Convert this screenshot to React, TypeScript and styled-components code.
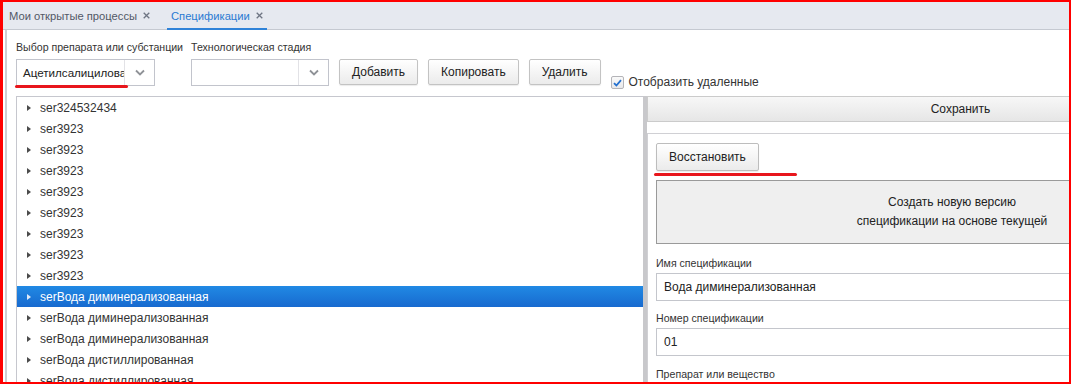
import React from "react";
import styled, { createGlobalStyle } from "styled-components";

const GlobalStyle = createGlobalStyle`
  html, body {
    margin: 0;
    padding: 0;
    background: #ffffff;
  }
  body {
    font-family: "Liberation Sans", Arial, sans-serif;
    font-size: 12px;
    color: #333;
  }
`;

const Screen = styled.div`
  position: relative;
  width: 1071px;
  height: 384px;
  overflow: hidden;
  background: #fff;
  padding: 2px 0 0 3px;
  box-sizing: border-box;
`;

// red annotation frame drawn over the screenshot
const Frame = styled.div`
  position: absolute;
  inset: 0;
  border-style: solid;
  border-color: #ff0000;
  border-width: 2px 2px 2px 3px;
  pointer-events: none;
  z-index: 10;
`;

const Mark = styled.div<{ $left: number; $top: number; $width: number }>`
  position: absolute;
  left: ${(p) => p.$left}px;
  top: ${(p) => p.$top}px;
  width: ${(p) => p.$width}px;
  height: 3px;
  border-radius: 2px;
  background: #e8161c;
  z-index: 10;
`;

const TabBar = styled.div`
  display: flex;
  align-items: stretch;
  gap: 13px;
  height: 28px;
  box-sizing: border-box;
  padding-left: 2px;
  background: #e6e9f0;
  border-bottom: 1px solid #c5c9d1;
`;

const Tab = styled.div<{ $active?: boolean }>`
  position: relative;
  display: flex;
  align-items: center;
  gap: 6px;
  padding: 0 4px;
  font-size: 11.2px;
  color: ${(p) => (p.$active ? "#2a7ad2" : "#525866")};
  &::after {
    content: "";
    display: ${(p) => (p.$active ? "block" : "none")};
    position: absolute;
    left: 0;
    right: 0;
    bottom: -1px;
    height: 2px;
    background: #2f82d8;
  }
`;

const CloseIcon = () => (
  <svg width="7" height="7" viewBox="0 0 7 7">
    <path d="M0.7 0.7 L6.3 6.3 M6.3 0.7 L0.7 6.3" stroke="#6e7583" strokeWidth="1.3" />
  </svg>
);

const Workspace = styled.div`
  margin-left: 2px;
  border-left: 2px solid #cdcdd2;
  padding-left: 9px;
  height: 354px;
  box-sizing: border-box;
  display: flex;
  flex-direction: column;
`;

const FilterBar = styled.div`
  display: flex;
  align-items: flex-end;
  padding-top: 10px;
  margin-bottom: 10px;
`;

const FieldGroup = styled.div<{ $width: number }>`
  display: flex;
  flex-direction: column;
  width: ${(p) => p.$width}px;
  flex-shrink: 0;
`;

const SmallLabel = styled.div`
  font-size: 10.6px;
  line-height: 14px;
  color: #333;
  white-space: nowrap;
  margin-bottom: 5px;
`;

const Combo = styled.div<{ $width: number }>`
  display: flex;
  width: ${(p) => p.$width}px;
  height: 27px;
  box-sizing: border-box;
  border: 1px solid #c2c4cc;
  background: #fff;
`;

const ComboValue = styled.div`
  flex: 1;
  overflow: hidden;
  white-space: nowrap;
  padding-left: 6px;
  line-height: 25px;
  font-size: 11.6px;
  color: #222;
`;

const ComboTrigger = styled.div`
  width: 29px;
  flex-shrink: 0;
  border-left: 1px solid #e2e2e6;
  display: flex;
  align-items: center;
  justify-content: center;
`;

const Chevron = () => (
  <svg width="10" height="7" viewBox="0 0 10 7">
    <polyline points="1,1.5 5,5.5 9,1.5" fill="none" stroke="#8f9297" strokeWidth="1.8" />
  </svg>
);

const Button = styled.button`
  height: 26px;
  margin-bottom: 1px;
  margin-left: 10px;
  padding: 0 12px;
  font-family: "Liberation Sans", Arial, sans-serif;
  font-size: 12px;
  color: #222;
  background: linear-gradient(#ffffff, #ebebeb);
  border: 1px solid #c3c3c3;
  border-radius: 2px;
  box-shadow: 0 1px 1px rgba(0, 0, 0, 0.08);
  white-space: nowrap;
`;

const CheckRow = styled.label`
  display: flex;
  align-items: center;
  gap: 5px;
  margin-left: 10px;
  margin-bottom: -3px;
  font-size: 12px;
  color: #333;
  white-space: nowrap;
`;

const CheckBox = styled.span`
  display: flex;
  align-items: center;
  justify-content: center;
  width: 13px;
  height: 13px;
  margin-top: 2px;
  box-sizing: border-box;
  border: 1px solid #b4b4b8;
  border-radius: 2px;
  background: linear-gradient(#fafafa, #e8e8ea);
`;

const Split = styled.div`
  flex: 1;
  display: flex;
  min-height: 0;
`;

const Tree = styled.div`
  width: 627px;
  flex-shrink: 0;
  box-sizing: border-box;
  border-top: 1px solid #c6c7ce;
  border-left: 1px solid #c6c7ce;
  overflow: hidden;
`;

const TreeRow = styled.div<{ $selected?: boolean }>`
  display: flex;
  align-items: center;
  gap: 9px;
  height: 21px;
  padding-left: 10px;
  font-size: 12px;
  white-space: nowrap;
  color: ${(p) => (p.$selected ? "#ffffff" : "#333")};
  background: ${(p) => (p.$selected ? "linear-gradient(#2189e4, #176acf)" : "transparent")};
`;

const Caret = styled.span<{ $light?: boolean }>`
  width: 0;
  height: 0;
  border-left: 4px solid ${(p) => (p.$light ? "#dfeaf8" : "#4b4b4b")};
  border-top: 3.5px solid transparent;
  border-bottom: 3.5px solid transparent;
`;

const Splitter = styled.div`
  width: 4px;
  flex-shrink: 0;
  background: #c8c8cb;
`;

const Detail = styled.div`
  width: 626px;
  flex-shrink: 0;
  display: flex;
  flex-direction: column;
`;

const DetailToolbar = styled.div`
  height: 26px;
  box-sizing: border-box;
  border: 1px solid #cbcbcb;
  border-right: none;
  background: linear-gradient(#f7f7f7, #e6e6e6);
  display: flex;
  align-items: center;
  justify-content: center;
  font-size: 12px;
  color: #222;
`;

const Form = styled.div`
  margin-top: 11px;
  flex: 1;
  border-top: 1px solid #d0d0d4;
  border-left: 1px solid #d0d0d4;
  padding: 9px 25px 0 8px;
  display: flex;
  flex-direction: column;
  align-items: flex-start;
`;

const RestoreButton = styled(Button)`
  height: 28px;
  margin: 0;
  padding: 0 12px;
  border-color: #bdbdbd;
`;

const WideButton = styled.div`
  align-self: stretch;
  margin-top: 9px;
  height: 64px;
  box-sizing: border-box;
  border: 1px solid #9a9a9a;
  background: #efefef;
  display: flex;
  align-items: center;
  justify-content: center;
  text-align: center;
  font-size: 12px;
  line-height: 19px;
  color: #222;
`;

const FieldLabel = styled.div<{ $gap: number }>`
  margin-top: ${(p) => p.$gap}px;
  margin-bottom: 3px;
  font-size: 10.6px;
  line-height: 14px;
  color: #333;
`;

const TextInput = styled.div`
  align-self: stretch;
  height: 28px;
  box-sizing: border-box;
  border: 1px solid #c4c6cc;
  padding-left: 7px;
  line-height: 26px;
  font-size: 12px;
  color: #222;
`;

const treeItems = [
  "ser324532434",
  "ser3923",
  "ser3923",
  "ser3923",
  "ser3923",
  "ser3923",
  "ser3923",
  "ser3923",
  "ser3923",
  "serВода диминерализованная",
  "serВода диминерализованная",
  "serВода диминерализованная",
  "serВода дистиллированная",
  "serВода дистиллированная",
];

const App = () => {
  return (
    <Screen>
      <GlobalStyle />
      <TabBar>
        <Tab>
          Мои открытые процессы <CloseIcon />
        </Tab>
        <Tab $active>
          Спецификации <CloseIcon />
        </Tab>
      </TabBar>
      <Workspace>
        <FilterBar>
          <FieldGroup $width={175}>
            <SmallLabel>Выбор препарата или субстанции</SmallLabel>
            <Combo $width={139}>
              <ComboValue>Ацетилсалициловая кислота</ComboValue>
              <ComboTrigger>
                <Chevron />
              </ComboTrigger>
            </Combo>
          </FieldGroup>
          <FieldGroup $width={138}>
            <SmallLabel>Технологическая стадия</SmallLabel>
            <Combo $width={138}>
              <ComboValue />
              <ComboTrigger>
                <Chevron />
              </ComboTrigger>
            </Combo>
          </FieldGroup>
          <Button>Добавить</Button>
          <Button>Копировать</Button>
          <Button>Удалить</Button>
          <CheckRow>
            <CheckBox>
              <svg width="9" height="8" viewBox="0 0 9 8">
                <polyline points="1,4.2 3.4,6.5 8,1.2" fill="none" stroke="#2470cf" strokeWidth="1.8" />
              </svg>
            </CheckBox>
            Отобразить удаленные
          </CheckRow>
        </FilterBar>
        <Split>
          <Tree>
            {treeItems.map((item, i) => (
              <TreeRow key={i} $selected={i === 9}>
                <Caret $light={i === 9} />
                {item}
              </TreeRow>
            ))}
          </Tree>
          <Splitter />
          <Detail>
            <DetailToolbar>Сохранить</DetailToolbar>
            <Form>
              <RestoreButton>Восстановить</RestoreButton>
              <WideButton>
                Создать новую версию
                <br />
                спецификации на основе текущей
              </WideButton>
              <FieldLabel $gap={12}>Имя спецификации</FieldLabel>
              <TextInput>Вода диминерализованная</TextInput>
              <FieldLabel $gap={10}>Номер спецификации</FieldLabel>
              <TextInput>01</TextInput>
              <FieldLabel $gap={11}>Препарат или вещество</FieldLabel>
            </Form>
          </Detail>
        </Split>
      </Workspace>
      <Mark $left={15} $top={85} $width={113} />
      <Mark $left={654} $top={173} $width={143} />
      <Frame />
    </Screen>
  );
};

export default App;
